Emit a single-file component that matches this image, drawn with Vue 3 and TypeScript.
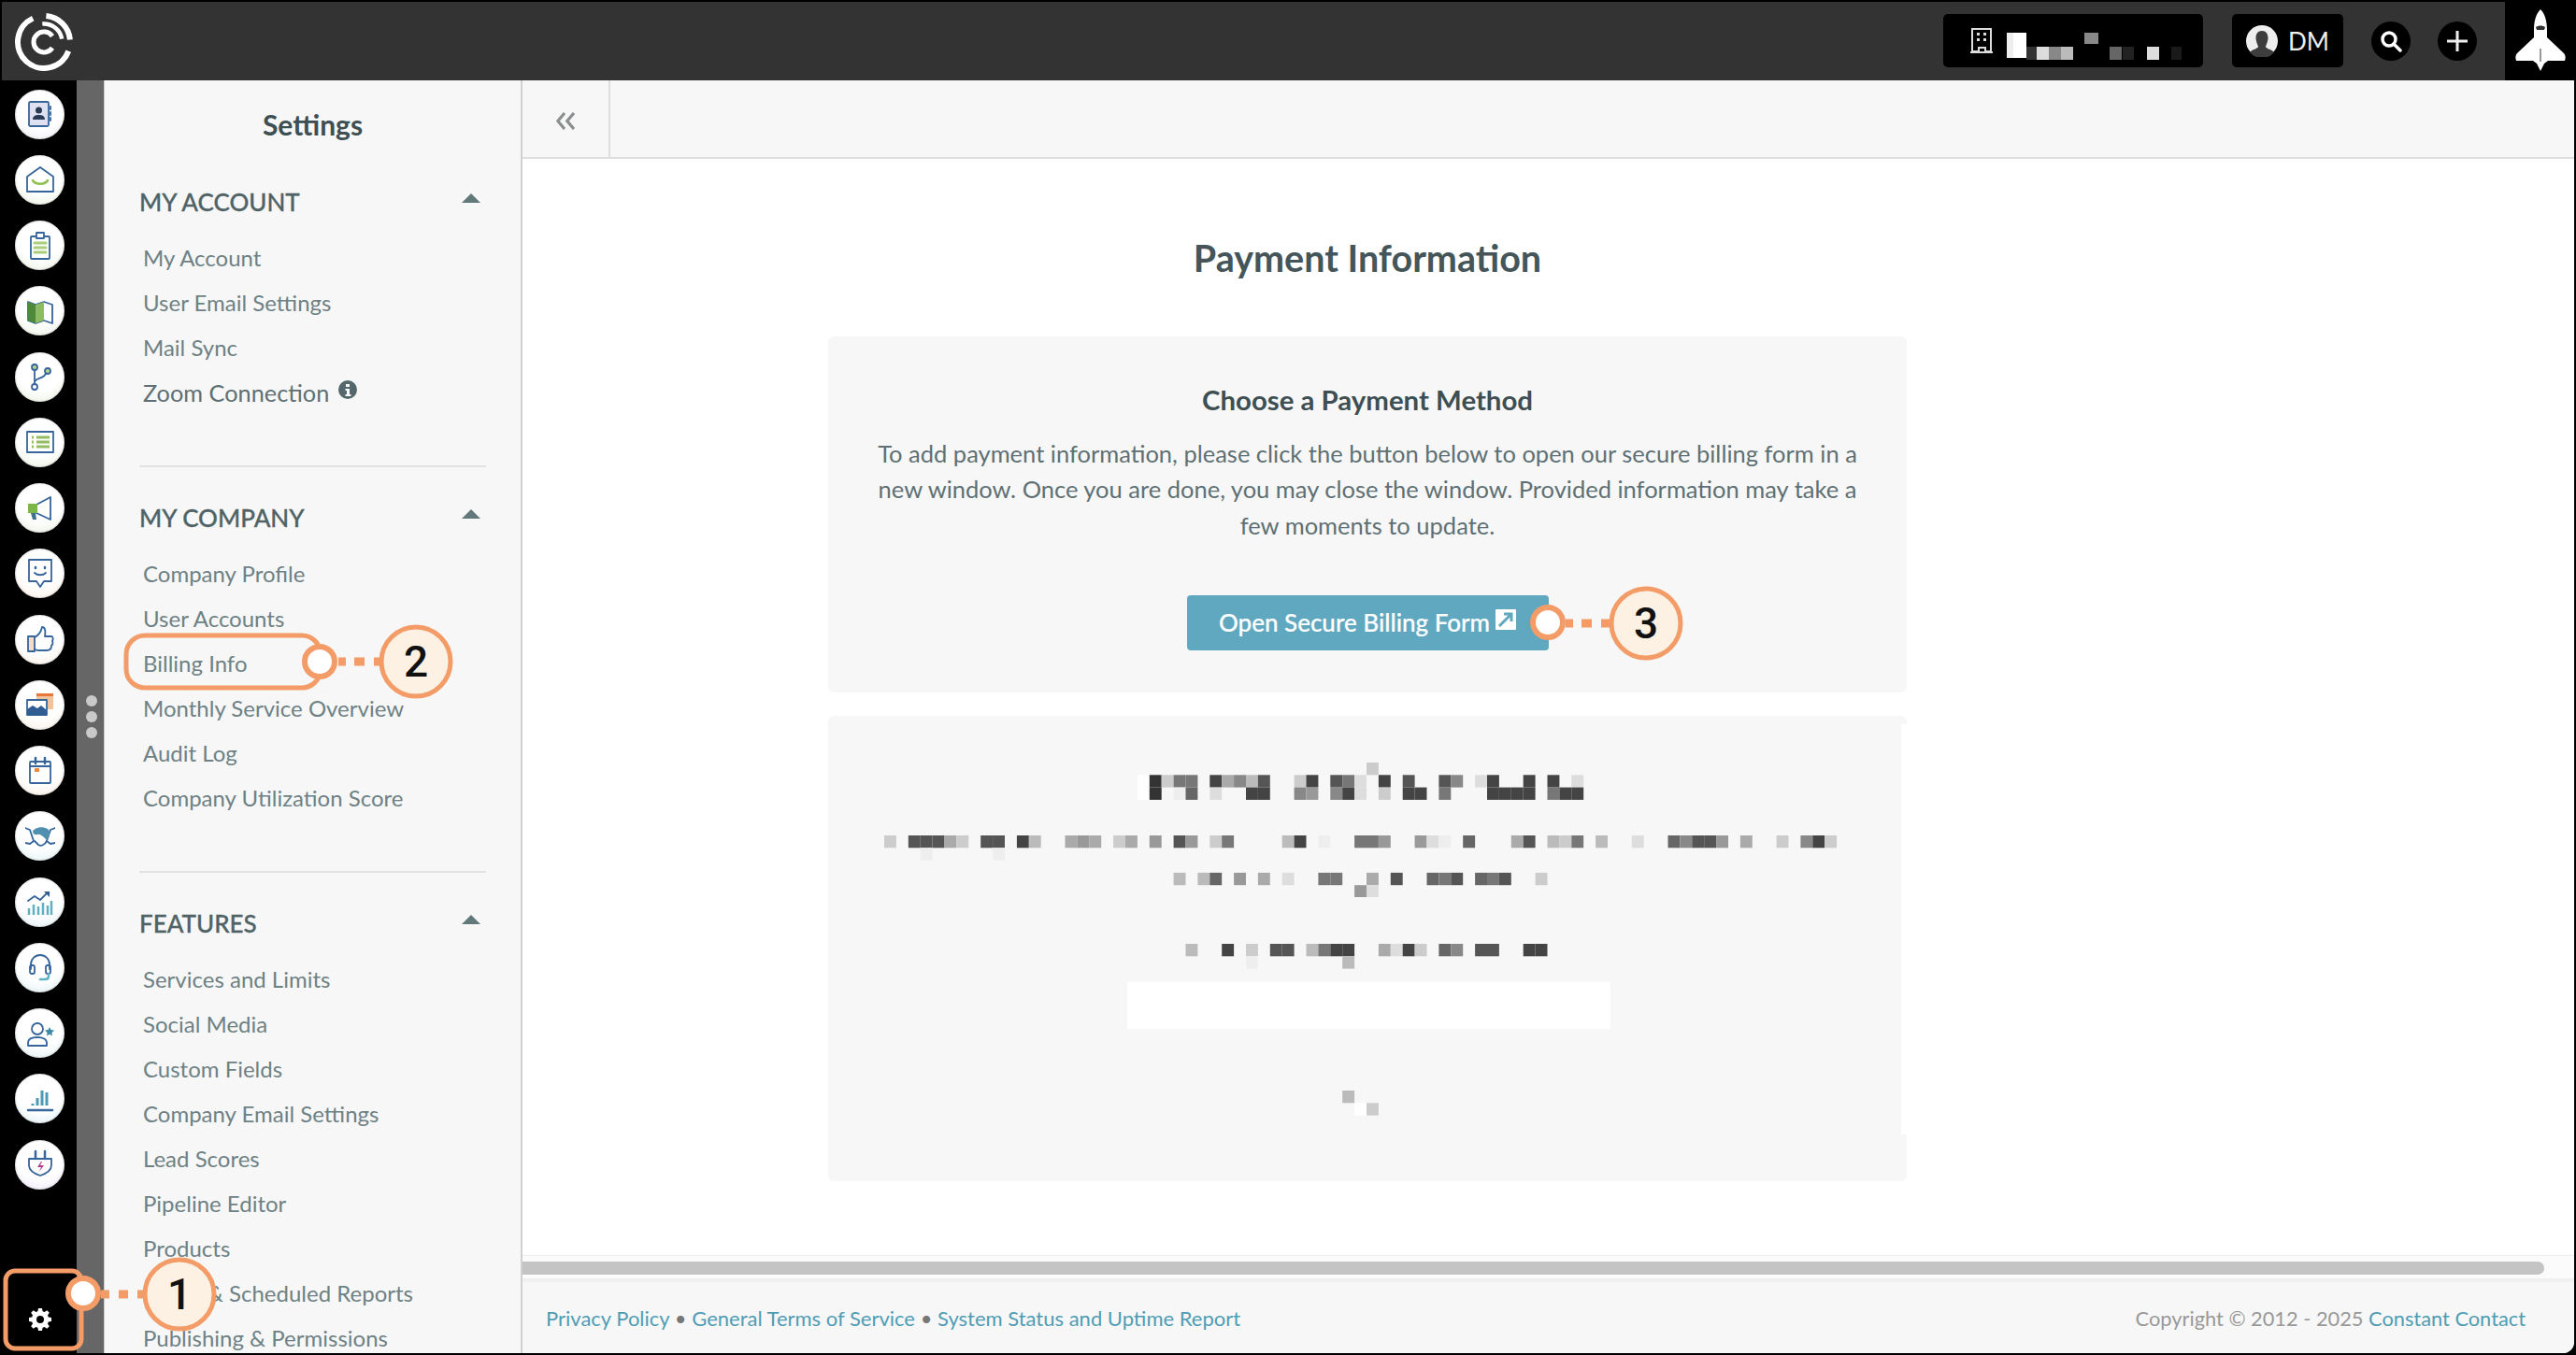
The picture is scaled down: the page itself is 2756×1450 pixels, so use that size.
<script setup lang="ts">
// pixelated areas are stored as "column:shade" tokens, one string per row
type Cell = { x: number; y: number; fill: string }

const CELL = 12.9
const ROW = 13.3

function toCells(rows: string[]): Cell[] {
  const cells: Cell[] = []
  rows.forEach((row, r) => {
    row.split(' ').filter(Boolean).forEach((token) => {
      const [col, shade] = token.split(':')
      cells.push({ x: Number(col) * CELL, y: r * ROW, fill: `#${shade.repeat(6)}` })
    })
  })
  return cells
}

const headingCells = toCells([
  '40:c',
  '21:f 22:3 23:c 24:7 25:7 27:4 28:a 29:8 30:b 31:5 34:c 35:4 37:5 38:7 39:d 41:4 43:5 46:5 47:8 49:d 50:4 53:4 55:4 57:d',
  '21:f 22:3 24:e 25:6 27:d 30:4 31:4 34:8 35:9 37:8 38:4 39:d 41:c 43:4 44:4 46:7 50:4 51:4 52:4 53:4 55:7 56:4 57:4'
])
const paragraphCells = toCells([
  '0:c 2:5 3:5 4:5 5:a 6:c 8:5 9:5 11:4 12:b 15:a 16:9 17:a 19:c 20:a 22:9 24:5 25:9 27:c 28:7 33:b 34:4 36:e 39:7 40:7 41:9 44:9 45:d 46:e 48:6 52:a 53:5 55:b 56:c 57:7 59:b 62:d 65:6 66:8 67:5 68:5 69:9 71:a 74:c 76:8 77:4 78:c',
  '3:e 9:e',
  '',
  '24:b 26:b 27:6 29:9 31:a 33:d 36:7 37:7 40:a 42:5 45:6 46:7 47:5 49:6 50:7 51:5 54:c',
  '39:9 40:d'
])
const labelCells = toCells([
  '25:b 28:4 30:c 32:5 33:5 35:b 36:7 37:4 38:4 41:a 42:d 43:4 44:c 46:6 47:8 49:5 50:5 53:4 54:4',
  '30:e 38:b'
])
const dotCells = toCells(['38:b', '39:f 40:c'])

const accountBlocks = [
  { x: 0, y: 13, w: 7, h: 27, fill: '#eee' },
  { x: 7, y: 13, w: 14, h: 27, fill: '#fff' },
  { x: 21, y: 28, w: 11, h: 14, fill: '#333' },
  { x: 32, y: 28, w: 13, h: 14, fill: '#ddd' },
  { x: 45, y: 28, w: 13, h: 14, fill: '#888' },
  { x: 58, y: 28, w: 13, h: 14, fill: '#bbb' },
  { x: 83, y: 13, w: 15, h: 12, fill: '#888' },
  { x: 110, y: 28, w: 13, h: 14, fill: '#666' },
  { x: 124, y: 28, w: 12, h: 14, fill: '#222' },
  { x: 150, y: 28, w: 13, h: 14, fill: '#ddd' },
  { x: 176, y: 28, w: 11, h: 14, fill: '#1a1a1a' }
]

const sections = [
  { title: 'MY ACCOUNT', links: ['My Account', 'User Email Settings', 'Mail Sync', 'Zoom Connection'] },
  {
    title: 'MY COMPANY',
    links: ['Company Profile', 'User Accounts', 'Billing Info', 'Monthly Service Overview', 'Audit Log', 'Company Utilization Score']
  },
  {
    title: 'FEATURES',
    links: [
      'Services and Limits',
      'Social Media',
      'Custom Fields',
      'Company Email Settings',
      'Lead Scores',
      'Pipeline Editor',
      'Products',
      'Saved & Scheduled Reports',
      'Publishing & Permissions'
    ]
  }
]

const railTints = [
  'lav', 'green', 'green', 'green', 'green', 'green', 'green',
  'peach', 'peach', 'peach', 'peach',
  'teal', 'teal', 'teal', 'teal', 'teal', 'violet'
]
</script>

<template>
  <div class="page">
    <header class="topbar">
      <svg class="logo" viewBox="0 0 64 64" width="64" height="64">
        <g fill="none" stroke="#fff">
          <path stroke-width="6" d="M34.400 4.100 A28 28 0 0 1 59.900 29.600" />
          <path stroke-width="6" d="M58.300 41.600 A28 28 0 1 1 20.200 6.600" />
          <path stroke-width="4.500" d="M30.300 12.600 A19.500 19.500 0 0 1 51.200 28.600" />
          <path stroke-width="5" d="M41 25.700 A11 11 0 1 0 41 38.300" />
        </g>
      </svg>
      <div class="topbar-right">
        <div class="pill account-pill">
          <svg width="26" height="28" viewBox="0 0 26 28">
            <path d="M3 1h20v24h-6v-4h-7v4H3z" fill="none" stroke="#ddd" stroke-width="2" />
            <path d="M1 26h24" stroke="#ddd" stroke-width="2" />
            <path d="M8 5h3v3H8zM15 5h3v3h-3zM8 11h3v3H8zM15 11h3v3h-3z" fill="#ddd" />
          </svg>
          <svg class="account-name" width="190" height="44" viewBox="0 0 190 44">
            <rect v-for="b in accountBlocks" :key="b.x" :x="b.x" :y="b.y" :width="b.w" :height="b.h" :fill="b.fill" />
          </svg>
        </div>
        <div class="pill user-pill">
          <svg width="34" height="34" viewBox="0 0 34 34">
            <circle cx="17" cy="17" r="17" fill="#eee" />
            <path d="M17 6c4.500 0 6.500 3.500 6.500 7.500S21 22 21 23c0 2 7 3 9 6a17 17 0 0 1-26 0c2-3 9-4 9-6 0-1-2.500-5.500-2.500-9.500S12.500 6 17 6z" fill="#3d3d3d" />
          </svg>
          <span>DM</span>
        </div>
        <div class="round-btn">
          <svg width="24" height="24" viewBox="0 0 24 24" fill="none" stroke="#fff" stroke-width="3.500">
            <circle cx="10" cy="10" r="7" />
            <path d="M15 15l7 7" stroke-linecap="round" />
          </svg>
        </div>
        <div class="round-btn">
          <svg width="24" height="24" viewBox="0 0 24 24" fill="none" stroke="#eee" stroke-width="3">
            <path d="M12 1v22M1 12h22" />
          </svg>
        </div>
        <div class="rocket-box">
          <svg width="54" height="66" viewBox="0 0 54 66">
            <path d="M27 0c5 5 7 13 7 22v8l18 17c2 2 2 5 1 8H35l-4 3-4 8-4-8-4-3H1c-1-3-1-6 1-8l18-17v-8c0-9 2-17 7-22z" fill="#fff" />
            <path d="M22 19c3-2 7-2 10 0l-1 3h-8z" fill="#333" />
            <path d="M27 42v14" stroke="#777" stroke-width="1.500" />
          </svg>
        </div>
      </div>
    </header>

    <div class="body">
      <nav class="rail">
        <div class="rail-icons">
          <div v-for="(tint, i) in railTints" :key="i" class="rail-icon" :class="tint">
            <svg width="32" height="32" viewBox="0 0 32 32" fill="none" stroke="#36659a" stroke-width="1.800" stroke-linejoin="round" stroke-linecap="round">
              <template v-if="i === 0">
                <rect x="4" y="3" width="21" height="26" rx="1.500" fill="#dfe0f0" />
                <circle cx="14.500" cy="12" r="3.500" fill="#2b3a55" stroke="none" />
                <path d="M8 22c0-4 3-5 6.500-5s6.500 1 6.500 5z" fill="#2b3a55" stroke="none" />
                <path d="M27 8v3M27 14v3M27 20v3" />
              </template>
              <template v-else-if="i === 1">
                <path d="M2 13L16 3l14 10v16H2z" />
                <path d="M8 17c3 5 13 5 16 0" stroke="#8fc04f" stroke-width="2.500" />
              </template>
              <template v-else-if="i === 2">
                <rect x="6" y="6" width="20" height="24" rx="1" />
                <rect x="12" y="2" width="8" height="6" fill="#fff" />
                <path d="M10 13h12M10 18h12M10 23h12" stroke="#a9cd78" stroke-width="3" />
              </template>
              <template v-else-if="i === 3">
                <path d="M3 6l8 3 9-3 9 3v20l-9-3-9 3-8-3z" />
                <path d="M11 9l9-3v20l-9 3z" fill="#8dbb63" stroke="none" />
                <path d="M3 6l8 3v20l-8-3z" fill="#4f8a3a" stroke="none" />
              </template>
              <template v-else-if="i === 4">
                <circle cx="10" cy="6" r="3" fill="#b7d48e" />
                <circle cx="24" cy="10" r="3" fill="#b7d48e" />
                <circle cx="10" cy="27" r="3" />
                <path d="M10 9v15M10 22c1-5 9-3 12-9" />
              </template>
              <template v-else-if="i === 5">
                <rect x="2" y="5" width="28" height="22" />
                <path d="M7 11h2M7 16h2M7 21h2M12 11h14M12 16h14M12 21h14" stroke="#93bd5e" stroke-width="3" stroke-linecap="butt" />
              </template>
              <template v-else-if="i === 6">
                <path d="M12 12L27 4v24l-15-7" />
                <rect x="3" y="11" width="10" height="10" fill="#7ab648" stroke="none" />
                <path d="M6 21h5l1 7H8z" fill="#3f6f8f" stroke="none" />
              </template>
              <template v-else-if="i === 7">
                <path d="M4 1h24v23H20l-4 6-4-6H4z" />
                <path d="M11 9v1M21 9v1" stroke-width="2.500" />
                <path d="M10 15c3 3 9 3 12 0" />
              </template>
              <template v-else-if="i === 8">
                <path d="M3 13h7v16H3z" fill="#f4dccb" />
                <path d="M10 14c4-2 7-6 8-11 3 0 4 3 3 10h7c2 0 2 3 1 5 1 2 0 4-1 5 0 3-2 5-5 5H14c-2 0-3-1-4-1" />
              </template>
              <template v-else-if="i === 9">
                <rect x="12" y="4" width="18" height="17" fill="#f2c39b" stroke="none" />
                <path d="M12 4h18v3H12z" fill="#e8763b" stroke="none" />
                <rect x="2" y="11" width="21" height="16" fill="#fff" />
                <path d="M2 27v-6l6-4 5 3 4-3 6 5v5z" fill="#2f5d92" stroke="none" />
              </template>
              <template v-else-if="i === 10">
                <rect x="5" y="6" width="22" height="23" rx="1" />
                <path d="M11 2v6M21 2v6" stroke-width="2.500" />
                <path d="M5 11h22" />
                <rect x="10" y="13" width="5" height="4" fill="#ef8a3c" stroke="none" />
              </template>
              <template v-else-if="i === 11">
                <path d="M0 7l5 2 4 12-4 3-5-1M32 7l-5 2-4 12 4 3 5-1" />
                <path d="M8 10c4-4 10-5 16-2 3 2 3 9-1 12-3-3-7-7-10-6-2 1-5 0-5-4z" fill="#4f90b0" stroke="none" />
                <path d="M10 21l4 4c3 2 7 0 9-4" />
              </template>
              <template v-else-if="i === 12">
                <path d="M3 15l7-5 6 4 7-7" />
                <path d="M20 5h6v6z" fill="#2f5d92" stroke="none" />
                <path d="M4 30v-7M9 30v-11M14 30v-9M19 30v-13M24 30v-10M28 30v-15" stroke="#5fb0c2" stroke-width="2.500" stroke-linecap="butt" />
              </template>
              <template v-else-if="i === 13">
                <path d="M6 18v-5a10 10 0 0 1 20 0v5" />
                <rect x="5" y="14" width="5" height="9" rx="2" />
                <rect x="22" y="14" width="5" height="9" rx="2" />
                <path d="M25 23v3c0 2-2 3-4 3h-5" stroke="#5fb0c2" stroke-width="2.500" />
              </template>
              <template v-else-if="i === 14">
                <circle cx="13" cy="11" r="6" />
                <path d="M3 29v-3c0-4 4-6 10-6s10 2 10 6v3z" />
                <path d="M26 9l1.500 3 3.500.5-2.500 2.500.5 3.500-3-1.700-3 1.700.5-3.500-2.500-2.500 3.500-.5z" fill="#3d8aa8" stroke="none" />
              </template>
              <template v-else-if="i === 15">
                <path d="M8 23v-2M13 23v-8M18 23V7M23 23V9" stroke="#4a9bb3" stroke-width="3" stroke-linecap="butt" />
                <path d="M3 28h26" stroke-width="2.500" />
              </template>
              <template v-else>
                <path d="M11 2v8M21 2v8" stroke-width="2.500" />
                <path d="M4 10h24v7c0 6-6 9-12 11C10 26 4 23 4 17z" />
                <path d="M17 13l-4 6h4l-2 5 5-7h-4l2-4z" fill="#b23a8e" stroke="none" />
              </template>
            </svg>
          </div>
        </div>
        <svg class="gear" viewBox="0 0 24 24" width="24" height="24">
          <path fill="#fff" fill-rule="evenodd" d="M10 0h4l.6 3.200 2 .8L19.300 2.200l2.500 2.500L20 7.400l.8 2L24 10v4l-3.200.6-.8 2 1.800 2.700-2.500 2.500-2.700-1.800-2 .8L14 24h-4l-.6-3.200-2-.8-2.700 1.800-2.500-2.500L4 16.600l-.8-2L0 14v-4l3.200-.6.8-2-1.800-2.700 2.500-2.500L7.400 4l2-.8zM12 8a4 4 0 1 0 0 8 4 4 0 0 0 0-8z" />
        </svg>
      </nav>

      <div class="gutter">
        <i /><i /><i />
      </div>

      <aside class="sidebar">
        <h2 class="sidebar-title">Settings</h2>
        <section v-for="s in sections" :key="s.title" class="menu-section">
          <div class="menu-head">
            <span>{{ s.title }}</span>
            <b class="caret" />
          </div>
          <ul>
            <li v-for="link in s.links" :key="link" :class="{ 'zoom-link': link === 'Zoom Connection' }">
              {{ link }}
              <svg v-if="link === 'Zoom Connection'" class="info" width="20" height="20" viewBox="0 0 20 20">
                <circle cx="10" cy="10" r="10" fill="#54686b" />
                <path d="M8 4h4v3H8zM7.500 9H12v6h1.500v2h-6v-2H9v-4H7.500z" fill="#f7f7f7" />
              </svg>
            </li>
          </ul>
        </section>
      </aside>

      <main class="main">
        <div class="subbar">
          <div class="collapse">
            <svg width="20" height="19" viewBox="0 0 20 19" fill="none" stroke="#8a8f90" stroke-width="3.200">
              <path d="M9 1L1.800 9.500 9 18M19 1l-7.200 8.500L19 18" />
            </svg>
          </div>
        </div>

        <div class="scroll-area">
          <h1 class="page-title">Payment Information</h1>
          <div class="card">
            <h3>Choose a Payment Method</h3>
            <p>
              To add payment information, please click the button below to open our secure billing form in a<br />
              new window. Once you are done, you may close the window. Provided information may take a<br />
              few moments to update.
            </p>
            <button class="billing-btn">
              Open Secure Billing Form
              <svg width="22" height="22" viewBox="0 0 22 22">
                <rect width="22" height="22" rx="1" fill="#fff" />
                <path d="M4 18L16 6M9 5h8v8" fill="none" stroke="#5fa8c0" stroke-width="3" />
              </svg>
            </button>
          </div>

          <div class="card blurred">
            <svg class="mosaic" width="1045" height="40">
              <rect v-for="(c, i) in headingCells" :key="i" :x="c.x" :y="c.y" :width="CELL" :height="ROW" :fill="c.fill" />
            </svg>
            <svg class="mosaic para" width="1045" height="66">
              <rect v-for="(c, i) in paragraphCells" :key="i" :x="c.x" :y="c.y" :width="CELL" :height="ROW" :fill="c.fill" />
            </svg>
            <svg class="mosaic label" width="1045" height="27">
              <rect v-for="(c, i) in labelCells" :key="i" :x="c.x" :y="c.y" :width="CELL" :height="ROW" :fill="c.fill" />
            </svg>
            <div class="blank-field" />
            <svg class="mosaic dots" width="1045" height="27">
              <rect v-for="(c, i) in dotCells" :key="i" :x="c.x" :y="c.y" :width="CELL" :height="ROW" :fill="c.fill" />
            </svg>
          </div>
        </div>

        <div class="scrollbar"><div class="scroll-thumb" /></div>

        <footer class="footer">
          <div class="footer-links">
            <a>Privacy Policy</a> <span>•</span> <a>General Terms of Service</a> <span>•</span>&#32;<a>System Status and Uptime Report</a>
          </div>
          <div class="copyright">Copyright © 2012 - 2025 <a>Constant Contact</a></div>
        </footer>
      </main>
    </div>

    <!-- numbered callouts drawn over the screenshot -->
    <svg class="callouts" width="2756" height="1450" viewBox="0 0 2756 1450">
      <g fill="none" stroke="#f39c68" stroke-width="5">
        <rect x="6" y="1360" width="81" height="83" rx="10" />
        <rect x="135" y="680" width="208" height="56" rx="20" />
      </g>
      <g stroke="#f39c68" stroke-width="9">
        <path d="M108 1385H156" stroke-dasharray="9 10 10 10 9" />
        <path d="M362 708H408" stroke-dasharray="8 9 11 10 8" />
        <path d="M1675 667H1722" stroke-dasharray="8 9 11 10 9" />
      </g>
      <g fill="#fff" stroke="#f39c68" stroke-width="6">
        <circle cx="89" cy="1384" r="16" />
        <circle cx="342" cy="708" r="16" />
        <circle cx="1656" cy="666" r="16" />
      </g>
      <g fill="#fdf1e3" stroke="#f39c68" stroke-width="5">
        <circle cx="192" cy="1385" r="37" />
        <circle cx="445" cy="708" r="37" />
        <circle cx="1761" cy="667" r="37" />
      </g>
      <g class="callout-num" text-anchor="middle">
        <text x="192" y="1401">1</text>
        <text x="445" y="724">2</text>
        <text x="1761" y="683">3</text>
      </g>
    </svg>
  </div>
</template>

<style>
html,
body {
  margin: 0;
  background: #000;
}
</style>

<style scoped>
.page {
  position: relative;
  width: 2756px;
  height: 1450px;
  overflow: hidden;
  display: flex;
  flex-direction: column;
  font-family: Lato, "Liberation Sans", sans-serif;
  background: #000;
  color: #5e7073;
}
.topbar {
  flex: 0 0 84px;
  margin: 2px 0 0 2px;
  display: flex;
  align-items: center;
  justify-content: space-between;
  background: #333;
  padding-left: 13px;
}
.logo {
  margin-top: 1px;
}
.topbar-right {
  height: 100%;
  display: flex;
  align-items: center;
}
.pill {
  height: 57px;
  margin-top: -1px;
  background: #000;
  border-radius: 5px;
  display: flex;
  align-items: center;
}
.account-pill {
  width: 278px;
  padding-left: 28px;
  box-sizing: border-box;
  margin-right: 31px;
}
.account-name {
  margin-left: 14px;
}
.user-pill {
  width: 119px;
  padding-left: 15px;
  box-sizing: border-box;
  gap: 11px;
  color: #eee;
  font-size: 26px;
  margin-right: 30px;
}
.round-btn {
  width: 42px;
  height: 42px;
  border-radius: 50%;
  background: #000;
  display: flex;
  align-items: center;
  justify-content: center;
  margin-right: 30px;
}
.round-btn + .round-btn {
  margin-left: -1px;
}
.rocket-box {
  width: 76px;
  height: 86px;
  margin-top: -2px;
  background: #000;
  display: flex;
  align-items: center;
  justify-content: center;
}
.body {
  flex: 1;
  min-height: 0;
  display: flex;
  margin-bottom: 2px;
}
.rail {
  flex: 0 0 82px;
  box-sizing: border-box;
  background: #000;
  position: relative;
  padding: 9.500px 0 0 16px;
}
.rail-icons {
  display: flex;
  flex-direction: column;
  gap: 17.250px;
}
.rail-icon {
  width: 53px;
  height: 53px;
  border-radius: 50%;
  display: flex;
  align-items: center;
  justify-content: center;
  box-shadow: inset 0 0 2px #aaa;
}
.rail-icon svg {
  filter: blur(0.4px);
}
.lav {
  background: radial-gradient(circle at 50% 30%, #fff 55%, #ece9f4 100%);
}
.green {
  background: radial-gradient(circle at 50% 30%, #fff 55%, #e6f0dc 100%);
}
.peach {
  background: radial-gradient(circle at 50% 30%, #fff 55%, #f8ecdf 100%);
}
.teal {
  background: radial-gradient(circle at 50% 30%, #fff 55%, #dceef0 100%);
}
.violet {
  background: radial-gradient(circle at 50% 30%, #fff 55%, #ebe4f5 100%);
}
.gear {
  position: absolute;
  left: 31px;
  bottom: 24px;
}
.gutter {
  flex: 0 0 30px;
  background: #666;
  display: flex;
  flex-direction: column;
  align-items: center;
  justify-content: center;
  gap: 5px;
  padding-left: 3px;
  box-sizing: border-box;
  border-right: 1px solid #ccc;
}
.gutter i {
  width: 12px;
  height: 12px;
  border-radius: 50%;
  background: #c9c9c9;
}
.sidebar {
  flex: 0 0 447px;
  box-sizing: border-box;
  background: #f7f7f7;
  border-right: 2px solid #d0d0d0;
  padding: 0 37px;
  overflow: hidden;
}
.sidebar-title {
  margin: 29px 0 0;
  text-align: center;
  font-size: 30px;
  line-height: 36px;
  font-weight: 700;
  color: #3d4f52;
}
.menu-section {
  padding-bottom: 54px;
  border-bottom: 2px solid #e2e2e2;
  margin-bottom: 36px;
}
.sidebar-title + .menu-section {
  margin-top: 47px;
}
.menu-section:last-child {
  border-bottom: 0;
}
.menu-head {
  height: 36px;
  display: flex;
  align-items: center;
  justify-content: space-between;
  font-size: 26px;
  font-weight: 500;
  color: #4f6366;
  -webkit-text-stroke: 0.3px #4f6366;
  padding-right: 6px;
}
.caret {
  width: 0;
  height: 0;
  border-left: 10px solid transparent;
  border-right: 10px solid transparent;
  border-bottom: 10px solid #62787b;
  margin-top: -8px;
}
ul {
  list-style: none;
  margin: 18px 0 0;
  padding: 0 0 0 4px;
}
li {
  height: 48px;
  line-height: 48px;
  font-size: 24px;
  color: #6e8184;
  white-space: nowrap;
}
li.zoom-link {
  font-size: 25.300px;
  color: #5e7073;
}
.info {
  margin-left: 3px;
  vertical-align: 3px;
}
.main {
  flex: 1;
  min-width: 0;
  margin-right: 2px;
  display: flex;
  flex-direction: column;
  background: #fff;
  border-bottom-right-radius: 12px;
  overflow: hidden;
}
.subbar {
  flex: 0 0 84px;
  box-sizing: border-box;
  background: #f7f7f7;
  border-bottom: 2px solid #ddd;
}
.collapse {
  width: 94px;
  height: 100%;
  box-sizing: border-box;
  border-right: 2px solid #ddd;
  display: flex;
  align-items: center;
  justify-content: center;
  padding-top: 4px;
}
.scroll-area {
  flex: 1;
  min-height: 0;
  width: 1154px;
  margin-left: 327px;
  display: flex;
  flex-direction: column;
  align-items: center;
}
.page-title {
  margin: 83px 0 0;
  font-size: 39.500px;
  line-height: 46px;
  font-weight: 700;
  color: #445659;
}
.card {
  width: 1154px;
  box-sizing: border-box;
  background: #f7f7f7;
  border-radius: 6px;
  margin-top: 61px;
  height: 381px;
  display: flex;
  flex-direction: column;
  align-items: center;
}
.card h3 {
  margin: 49px 0 0;
  font-size: 29.400px;
  line-height: 38px;
  font-weight: 700;
  color: #3d4f52;
}
.card p {
  margin: 18.500px 0 0;
  font-size: 25.500px;
  line-height: 38.800px;
  text-align: center;
  color: #5e7073;
}
.billing-btn {
  margin-top: 55px;
  width: 387px;
  height: 59px;
  padding: 0;
  border: 0;
  border-radius: 4px;
  background: #5fa8c0;
  color: #fff;
  font: 500 26px Lato, "Liberation Sans", sans-serif;
  -webkit-text-stroke: 0.2px #fff;
  display: flex;
  align-items: center;
  justify-content: center;
  gap: 6px;
}
.billing-btn svg {
  margin-top: -6px;
}
.blurred {
  position: relative;
  margin-top: 25px;
  height: 498px;
  display: block;
  padding: 50px 0 0 60px;
}
.blurred::after {
  content: "";
  position: absolute;
  right: 0;
  top: 9px;
  width: 6px;
  height: 439px;
  background: #fff;
}
.mosaic {
  display: block;
}
.para {
  margin-top: 38px;
}
.label {
  margin-top: 50px;
}
.blank-field {
  width: 517px;
  height: 50px;
  margin: 14px 0 0 260px;
  background: #fff;
}
.dots {
  margin-top: 66px;
}
.scrollbar {
  flex: 0 0 29px;
  box-sizing: border-box;
  padding-top: 6px;
  background: #fbfbfb;
  border-top: 1px solid #eee;
  border-bottom: 4px solid #f0f0f0;
}
.scroll-thumb {
  width: 2163px;
  height: 14px;
  background: #c4c4c4;
  border-radius: 0 7px 7px 0;
}
.footer {
  flex: 0 0 76px;
  display: flex;
  align-items: center;
  justify-content: space-between;
  background: #f7f7f7;
  padding: 0 52px 0 25px;
  font-size: 22px;
  color: #999;
  white-space: nowrap;
}
.copyright {
  font-size: 21.800px;
}
.footer a {
  color: #4f9db5;
}
.footer-links span {
  color: #777;
}
.callouts {
  position: absolute;
  left: 0;
  top: 0;
  pointer-events: none;
}
.callout-num {
  font: 500 46px Roboto, "Liberation Sans", sans-serif;
  fill: #111;
}
</style>
